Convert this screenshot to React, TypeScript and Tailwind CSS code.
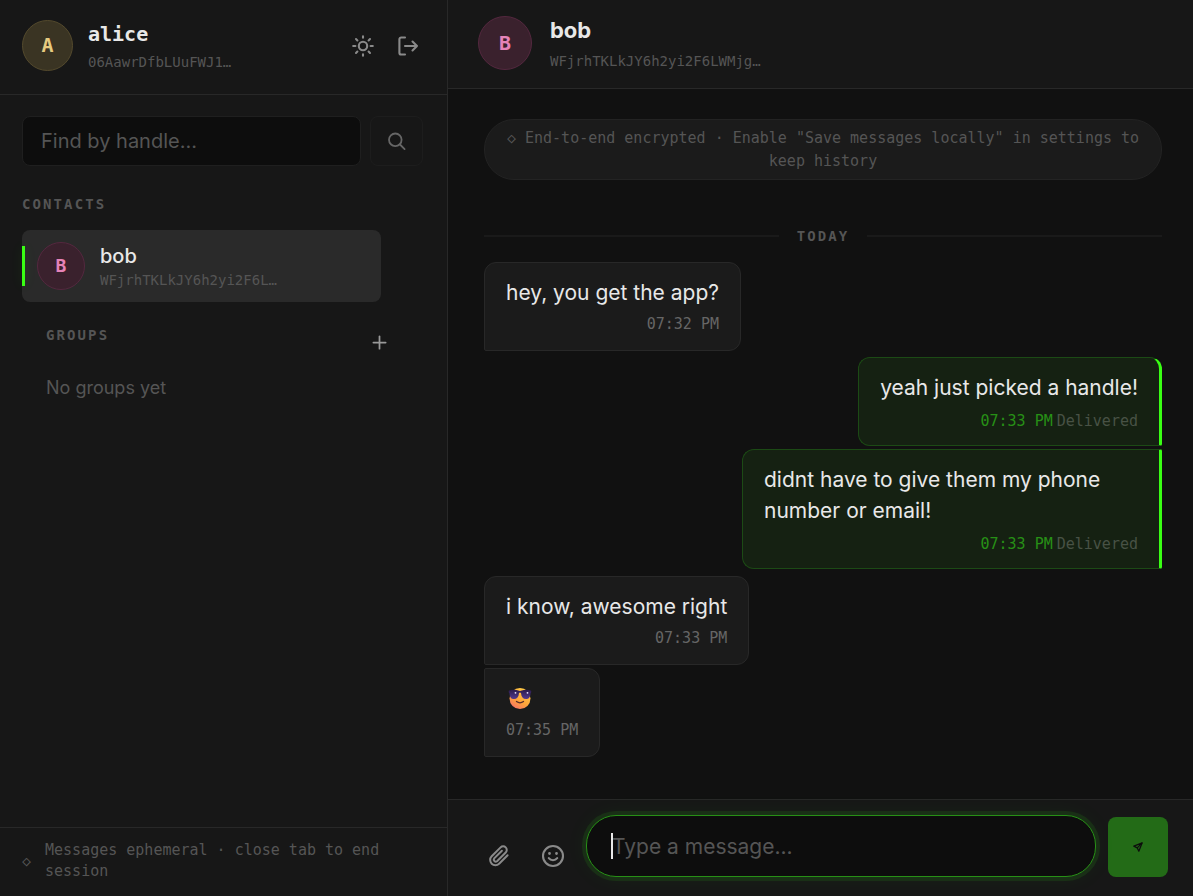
import React, { useState } from 'react';
import { Plus } from 'lucide-react';

interface Message {
  id: number;
  text: string;
  time: string;
  mine?: boolean;
  grouped?: boolean;
  emoji?: boolean;
}

const MESSAGES: Message[] = [
  { id: 1, text: 'hey, you get the app?', time: '07:32 PM' },
  { id: 2, text: 'yeah just picked a handle!', time: '07:33 PM', mine: true },
  { id: 3, text: 'didnt have to give them my phone number or email!', time: '07:33 PM', mine: true, grouped: true },
  { id: 4, text: 'i know, awesome right', time: '07:33 PM' },
  { id: 5, text: 'smiling face with sunglasses', time: '07:35 PM', grouped: true, emoji: true },
];

const SunIcon = () => (
  <svg width="24" height="24" viewBox="0 0 24 24" fill="none" stroke="currentColor" strokeWidth="2.1" strokeLinecap="round">
    <circle cx="12" cy="12" r="4.2" />
    <path d="M12 2.200v1.600M12 20.200v1.600M5 5l1.400 1.400M17.600 17.600l1.400 1.400M2.200 12h2.200M19.600 12h2.200M5 19l1.400-1.400M17.600 6.400l1.400-1.400" />
  </svg>
);

const LogoutIcon = () => (
  <svg width="24" height="24" viewBox="0 0 24 24" fill="none" stroke="currentColor" strokeWidth="2.1" strokeLinecap="round" strokeLinejoin="round">
    <path d="M9 3.500H5.200A1.800 1.800 0 0 0 3.400 5.300v13.400a1.800 1.800 0 0 0 1.800 1.800H9" />
    <path d="M9 12h12M16.500 7.500L21 12l-4.500 4.500" />
  </svg>
);

const SearchIcon = () => (
  <svg width="21" height="21" viewBox="0 0 21 21" fill="none" stroke="currentColor" strokeWidth="1.8" strokeLinecap="round">
    <circle cx="9.300" cy="8.800" r="6.300" />
    <path d="M14 13.500l4.600 4.600" />
  </svg>
);

const ClipIcon = () => (
  <svg width="24" height="24" viewBox="0 0 24 24" fill="none" stroke="currentColor" strokeWidth="2" strokeLinecap="round" strokeLinejoin="round">
    <path d="M20.600 11.200l-8.500 8.500a5.200 5.200 0 0 1-7.400-7.400l8.900-8.900a3.600 3.600 0 0 1 5.100 5.100l-8.700 8.700a2 2 0 0 1-2.800-2.800l7.700-7.700" />
  </svg>
);

const SmileIcon = () => (
  <svg width="24" height="24" viewBox="0 0 24 24" fill="none" stroke="currentColor" strokeWidth="2.1" strokeLinecap="round">
    <circle cx="12" cy="12" r="10" />
    <path d="M7.800 14.200s1.500 2 4.200 2 4.200-2 4.200-2" />
    <path d="M8.500 9.500h.01M15.500 9.500h.01" strokeWidth="2.800" />
  </svg>
);

const SendIcon = () => (
  <svg width="10" height="10" viewBox="0 0 24 24" fill="none" stroke="currentColor" strokeWidth="3" strokeLinejoin="round">
    <path d="M22 2L2 10l8 4 4 8z" />
    <path d="M22 2L10 14" />
  </svg>
);

// Cool face, drawn so that it looks the same on every platform
const CoolFace = ({ label }: { label: string }) => (
  <svg role="img" aria-label={label} width="28" height="28" viewBox="0 0 28 28">
    <defs>
      <linearGradient id="face" x1="0.8" y1="0" x2="0.2" y2="1">
        <stop offset="0" stopColor="#ffcf45" />
        <stop offset="0.6" stopColor="#ffa43a" />
        <stop offset="1" stopColor="#f9706b" />
      </linearGradient>
      <linearGradient id="lens" x1="0" y1="0" x2="0" y2="1">
        <stop offset="0" stopColor="#2b1b4d" />
        <stop offset="1" stopColor="#533a8e" />
      </linearGradient>
    </defs>
    <circle cx="14" cy="13.500" r="10.500" fill="url(#face)" />
    <path d="M3 5.600c3-1.200 7-1.200 9.200 0q1.800.6 3.600 0c2.200-1.200 6.200-1.200 9.200 0c.6 1.200.2 2.200-.5 2.800c-.2 4-2 5.600-4.500 5.600c-3 0-4.700-2-5-6q-1-.9-2 0c-.3 4-2 6-5 6c-2.500 0-4.300-1.600-4.500-5.600c-.7-.6-1.100-1.600-.5-2.800z" fill="url(#lens)" />
    <path d="M10.500 16.500q3.500 2.600 7 0" fill="none" stroke="#5a2b2b" strokeWidth="1.300" strokeLinecap="round" />
    <circle cx="9.500" cy="7.800" r="0.900" fill="#e8e0ff" />
    <circle cx="21.500" cy="7.800" r="0.900" fill="#e8e0ff" />
  </svg>
);

const Bubble: React.FC<{ message: Message }> = ({ message }) => {
  const { text, time, mine, grouped, emoji } = message;

  if (mine) {
    return (
      <div
        className={`ml-auto max-w-[420px] rounded-xl rounded-br-xs border border-r-3 border-[#1c4a15] border-r-[#39ff14] bg-[#152112] px-[21px] pt-3.5 pb-3 ${
          grouped ? 'mt-[3px] rounded-tr-xs' : 'mt-1.5'
        }`}
      >
        <p className="text-[21px] leading-[31px]">{text}</p>
        <div className="mt-1.5 flex justify-end gap-1 font-['DejaVu_Sans_Mono',monospace] text-[15px] leading-6">
          <time className="text-[#279016]">{time}</time>
          <span className="text-[#485245]">Delivered</span>
        </div>
      </div>
    );
  }

  return (
    <div
      className={`mr-auto rounded-xl rounded-bl-xs border border-[#282828] bg-[#1b1b1b] px-[21px] pt-3.5 pb-3.5 ${
        grouped ? 'mt-[3px] rounded-tl-xs' : 'mt-[7px]'
      }`}
    >
      <p className="flex h-[31px] items-center text-[21px] leading-[31px]">
        {emoji ? <CoolFace label={text} /> : text}
      </p>
      <div className="mt-1 text-right font-['DejaVu_Sans_Mono',monospace] text-[15px] leading-6 text-[#666]">
        <time className="block">{time}</time>
      </div>
    </div>
  );
};

export default function App() {
  const [handle, setHandle] = useState('');
  const [draft, setDraft] = useState('');

  return (
    <div className="flex h-screen bg-[#111] font-[Inter,sans-serif] text-[#e8e8e8]">
      {/* Sidebar */}
      <aside className="flex w-md shrink-0 flex-col border-r border-[#282828] bg-[#171717]">
        <header className="flex h-[95px] shrink-0 items-center border-b border-[#282828] px-[22px] pb-1">
          <div className="flex size-[51px] items-center justify-center rounded-full border border-[#544a2d] bg-[#3a3423] font-['DejaVu_Sans_Mono',monospace] text-xl font-bold text-[#e6cb80]">
            A
          </div>
          <div className="mt-1.5 ml-[15px] font-['DejaVu_Sans_Mono',monospace]">
            <h1 className="text-xl leading-7 font-bold">alice</h1>
            <p className="text-sm leading-7 text-[#555]">06AawrDfbLUuFWJ1…</p>
          </div>
          <div className="mt-0.5 ml-auto flex items-center gap-[21px] pr-[5px] text-[#8a8a8a]">
            <button type="button" aria-label="Toggle theme">
              <SunIcon />
            </button>
            <button type="button" aria-label="Log out">
              <LogoutIcon />
            </button>
          </div>
        </header>

        <form className="flex gap-[9px] pt-[21px] pr-6 pl-[22px]" onSubmit={(e) => e.preventDefault()}>
          <input
            type="text"
            aria-label="Find by handle"
            placeholder="Find by handle..."
            value={handle}
            onChange={(e) => setHandle(e.target.value)}
            className="h-[50px] min-w-0 flex-1 rounded-lg border border-[#1f1f1f] bg-[#0d0d0d] px-[18px] text-[20px] outline-none placeholder:text-[#555]"
          />
          <button
            type="submit"
            aria-label="Search"
            className="flex h-[50px] w-[53px] items-center justify-center rounded-lg border border-[#1d1d1d] text-[#666]"
          >
            <SearchIcon />
          </button>
        </form>

        <nav className="flex-1">
          <h2 className="mt-7 px-[22px] font-['DejaVu_Sans_Mono',monospace] text-sm leading-5 font-bold tracking-[0.15em] text-[#555]">
            CONTACTS
          </h2>
          <button
            type="button"
            className="relative mt-4 ml-[22px] flex h-[72px] w-[359px] items-center rounded-lg bg-[#2a2a2a] pl-[15px] text-left"
          >
            <span className="absolute top-4 bottom-4 left-0 w-[3px] bg-[#39ff14] shadow-[0_0_12px_rgba(57,255,20,0.12)]" />
            <span className="flex size-12 items-center justify-center rounded-full border border-[#54283f] bg-[#3a212d] font-['DejaVu_Sans_Mono',monospace] text-lg font-bold text-[#e583b8]">
              B
            </span>
            <span className="mt-[3px] ml-[15px] flex flex-col">
              <span className="text-[20px] leading-6 font-medium">bob</span>
              <span className="font-['DejaVu_Sans_Mono',monospace] text-sm leading-6 text-[#555]">WFjrhTKLkJY6h2yi2F6L…</span>
            </span>
          </button>

          <div className="mt-[21px] flex items-start justify-between pr-[57px] pl-[46px]">
            <h2 className="font-['DejaVu_Sans_Mono',monospace] text-sm leading-6 font-bold tracking-[0.15em] text-[#555]">
              GROUPS
            </h2>
            <button type="button" aria-label="New group" className="mt-[9px] text-[#999]">
              <Plus size={21} strokeWidth={2} />
            </button>
          </div>
          <p className="mt-[21px] pl-[46px] text-lg leading-7 text-[#555]">No groups yet</p>
        </nav>

        <footer className="flex h-[69px] items-center gap-3.5 border-t border-[#282828] px-[22px] pb-0.5 font-['DejaVu_Sans_Mono',monospace] text-[15px] leading-[21px] text-[#555]">
          <span>◇</span>
          <p>Messages ephemeral · close tab to end session</p>
        </footer>
      </aside>

      {/* Conversation */}
      <main className="flex min-w-0 flex-1 flex-col">
        <header className="flex h-[89px] shrink-0 items-center border-b border-[#282828] bg-[#171717] px-[30px] pb-0.5">
          <div className="flex size-[54px] items-center justify-center rounded-full border border-[#54283f] bg-[#3a212d] font-['DejaVu_Sans_Mono',monospace] text-xl font-bold text-[#e583b8]">
            B
          </div>
          <div className="mt-1 ml-[18px]">
            <h2 className="text-[22px] leading-8 font-bold">bob</h2>
            <p className="font-['DejaVu_Sans_Mono',monospace] text-sm leading-[30px] text-[#555]">WFjrhTKLkJY6h2yi2F6LWMjg…</p>
          </div>
        </header>

        <section className="flex flex-1 flex-col overflow-hidden pt-[30px] pr-[31px] pl-9">
          <p className="rounded-[30px] border border-[#232323] bg-[#1b1b1b] px-4 pt-[7px] pb-1.5 text-center font-['DejaVu_Sans_Mono',monospace] text-[15px] leading-[23px] text-[#555]">
            ◇ End-to-end encrypted · Enable "Save messages locally" in settings to keep history
          </p>
          <div className="mt-[46px] mb-[9px] flex items-center gap-[18px] font-['DejaVu_Sans_Mono',monospace] text-sm leading-5 font-bold tracking-[0.15em] text-[#555]">
            <span className="h-0.5 flex-1 bg-[#1a1a1a]" />
            TODAY
            <span className="h-0.5 flex-1 bg-[#1a1a1a]" />
          </div>
          {MESSAGES.map((message) => (
            <Bubble key={message.id} message={message} />
          ))}
        </section>

        <form
          className="flex h-[97px] shrink-0 items-center border-t border-[#282828] bg-[#171717] pr-[25px] pb-1 pl-[39px]"
          onSubmit={(e) => e.preventDefault()}
        >
          <div className="mt-5 mr-[21px] flex gap-[30px] text-[#8a8a8a]">
            <button type="button" aria-label="Attach file">
              <ClipIcon />
            </button>
            <button type="button" aria-label="Insert emoji">
              <SmileIcon />
            </button>
          </div>
          <div className="relative flex min-w-0 flex-1">
            <input
              type="text"
              autoFocus
              aria-label="Message"
              placeholder="Type a message..."
              value={draft}
              onChange={(e) => setDraft(e.target.value)}
              className={`h-[62px] w-full rounded-[30px] border border-[#279016] bg-[#0d0d0d] px-[25px] text-[21px] shadow-[0_0_0_4px_rgba(57,255,20,0.09),0_0_24px_rgba(57,255,20,0.06)] outline-none placeholder:text-[#555] ${
                draft ? '' : 'caret-transparent'
              }`}
            />
            {!draft && <span className="pointer-events-none absolute inset-y-[18px] left-[25px] w-0.5 bg-[#e8e8e8]" />}
          </div>
          <button
            type="submit"
            aria-label="Send"
            className="mt-0.5 ml-3 flex size-[60px] items-center justify-center rounded-lg bg-[#236b17] text-[#0d0d0d]"
          >
            <SendIcon />
          </button>
        </form>
      </main>
    </div>
  );
}
